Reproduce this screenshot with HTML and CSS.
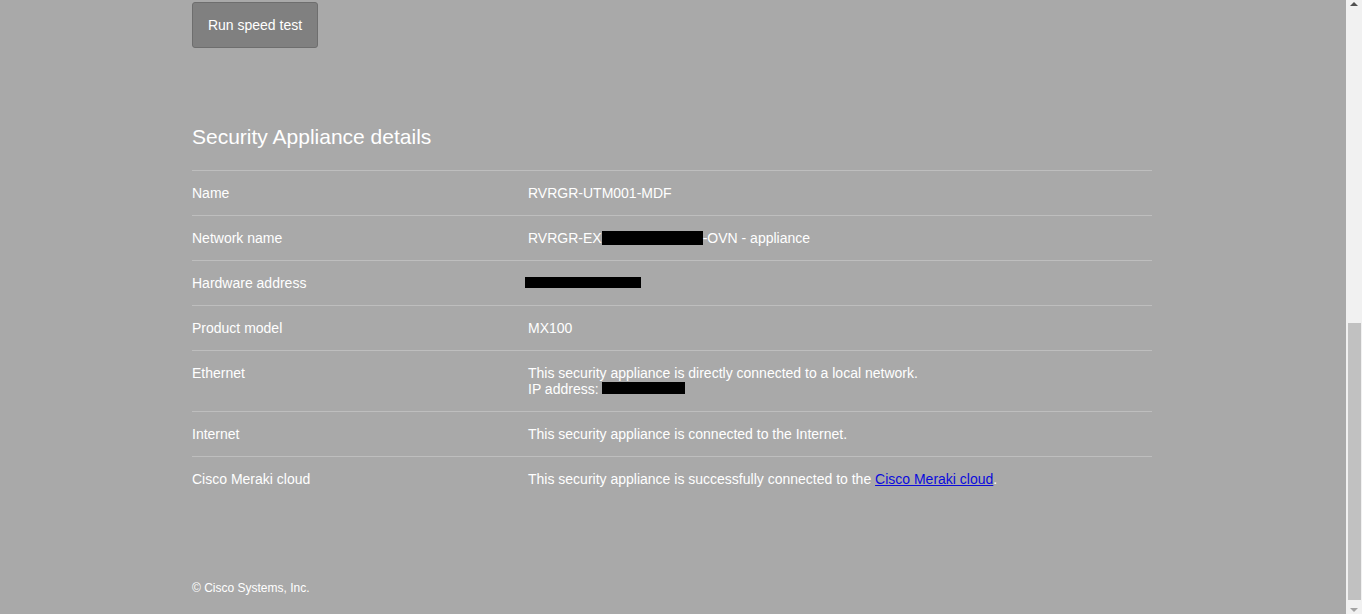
FILE: index.html
```html
<!DOCTYPE html>
<html>
<head>
<meta charset="utf-8">
<link rel="stylesheet" href="styles.css">
</head>
<body>
<div class="viewport">
  <main class="page">
    <div class="container">
      <button class="btn">Run speed test</button>
      <h2 class="title">Security Appliance details</h2>
      <div class="table">
        <div class="row"><div class="label">Name</div><div class="value">RVRGR-UTM001-MDF</div></div>
        <div class="row"><div class="label">Network name</div><div class="value">RVRGR-EX<span class="redact r1"></span>-OVN - appliance</div></div>
        <div class="row"><div class="label">Hardware address</div><div class="value"><span class="redact r2"></span></div></div>
        <div class="row"><div class="label">Product model</div><div class="value">MX100</div></div>
        <div class="row"><div class="label">Ethernet</div><div class="value">This security appliance is directly connected to a local network.<br>IP address: <span class="redact r3"></span></div></div>
        <div class="row"><div class="label">Internet</div><div class="value">This security appliance is connected to the Internet.</div></div>
        <div class="row last"><div class="label">Cisco Meraki cloud</div><div class="value">This security appliance is successfully connected to the <a href="#">Cisco Meraki cloud</a>.</div></div>
      </div>
      <footer class="footer">© Cisco Systems, Inc.</footer>
    </div>
  </main>
  <div class="scrollbar">
    <div class="arrow up"></div>
    <div class="track"><div class="thumb"></div></div>
    <div class="arrow down"></div>
  </div>
</div>
</body>
</html>
```
FILE: styles.css
```css
* { box-sizing: border-box; }
html, body { margin: 0; padding: 0; height: 100%; overflow: hidden; }
body {
  background: #a9a9a9;
  font-family: "Liberation Sans", Arial, sans-serif;
  color: #ffffff;
}
.viewport { display: flex; height: 614px; }
.page { flex: 1; min-width: 0; }
.container {
  width: 960px;
  margin-left: 192px;
  padding-top: 2px;
}
.btn {
  display: block;
  width: 126px;
  height: 46px;
  background: #808080;
  border: 1px solid #6e6e6e;
  border-radius: 3px;
  color: #ffffff;
  font-family: "Liberation Sans", Arial, sans-serif;
  font-size: 14px;
  padding: 0;
}
.title {
  margin: 77px 0 0 0;
  height: 45px;
  font-size: 21px;
  font-weight: normal;
  line-height: 24px;
  padding-top: 0;
}
.table { border-top: 1px solid #bebebe; }
.row {
  display: flex;
  border-bottom: 1px solid #bebebe;
  padding: 14px 0;
  font-size: 14px;
  line-height: 16px;
}
.row.last { border-bottom: none; }
.label { width: 336px; flex: none; }
.value { flex: 1; }
.redact {
  display: inline-block;
  background: #000;
  vertical-align: top;
}
.r1 { width: 101px; height: 14px; margin-top: 1px; }
.r2 { width: 116px; height: 11px; margin-left: -3px; margin-top: 2px; }
.r3 { width: 83px; height: 12px; margin-top: 1px; }
a { color: #0b0bdc; text-decoration: underline; }
.footer {
  margin-top: 80px;
  font-size: 12px;
  line-height: 14px;
}
.scrollbar {
  width: 16px;
  flex: none;
  background: #f1f1f1;
  display: flex;
  flex-direction: column;
}
.arrow { height: 14px; flex: none; display: flex; justify-content: center; }
.arrow.up { align-items: flex-start; padding-top: 2px; }
.arrow.up::before {
  content: "";
  border-left: 4px solid transparent;
  border-right: 4px solid transparent;
  border-bottom: 4px solid #505050;
}
.arrow.down { align-items: flex-end; padding-bottom: 2px; }
.arrow.down::before {
  content: "";
  border-left: 4px solid transparent;
  border-right: 4px solid transparent;
  border-top: 4px solid #a3a3a3;
}
.track { flex: 1; display: flex; flex-direction: column; justify-content: flex-end; padding: 0 1px 0 2px; }
.thumb { height: 277px; background: #c1c1c1; }
```
